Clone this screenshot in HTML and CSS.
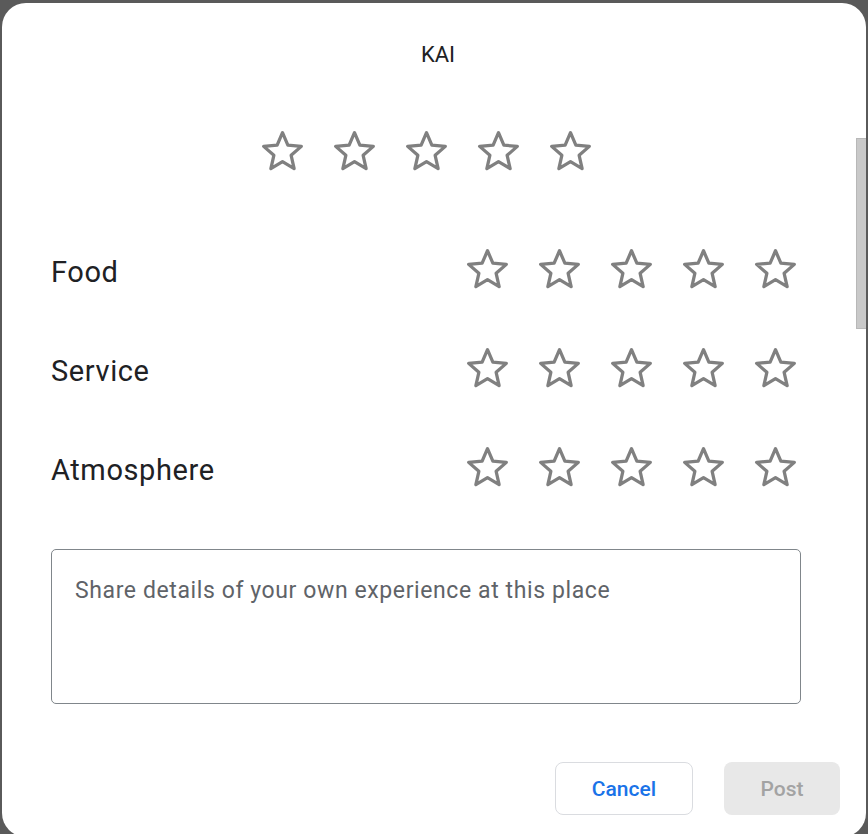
FILE: index.html
```html
<!DOCTYPE html>
<html lang="en">
<head>
<meta charset="utf-8">
<title>KAI review</title>
<link rel="stylesheet" href="styles.css">
</head>
<body>
<svg width="0" height="0" class="defs" aria-hidden="true">
  <defs>
    <symbol id="star" viewBox="0 0 24 24">
      <polygon points="12,2.8 14.62,8.9 21.23,9.5 16.23,13.88 17.7,20.35 12,16.95 6.3,20.35 7.77,13.88 2.77,9.5 9.38,8.9" fill="none" stroke="#808080" stroke-width="1.6" stroke-linejoin="round"/>
    </symbol>
  </defs>
</svg>
<div class="dialog">
  <div class="scrollbar"></div>
  <div class="title">KAI</div>
  <div class="content">
    <div class="stars stars-main">
      <svg class="star"><use href="#star"/></svg>
      <svg class="star"><use href="#star"/></svg>
      <svg class="star"><use href="#star"/></svg>
      <svg class="star"><use href="#star"/></svg>
      <svg class="star"><use href="#star"/></svg>
    </div>
    <div class="rows">
      <div class="row">
        <span class="label">Food</span>
        <div class="stars">
          <svg class="star"><use href="#star"/></svg>
          <svg class="star"><use href="#star"/></svg>
          <svg class="star"><use href="#star"/></svg>
          <svg class="star"><use href="#star"/></svg>
          <svg class="star"><use href="#star"/></svg>
        </div>
      </div>
      <div class="row">
        <span class="label">Service</span>
        <div class="stars">
          <svg class="star"><use href="#star"/></svg>
          <svg class="star"><use href="#star"/></svg>
          <svg class="star"><use href="#star"/></svg>
          <svg class="star"><use href="#star"/></svg>
          <svg class="star"><use href="#star"/></svg>
        </div>
      </div>
      <div class="row">
        <span class="label">Atmosphere</span>
        <div class="stars">
          <svg class="star"><use href="#star"/></svg>
          <svg class="star"><use href="#star"/></svg>
          <svg class="star"><use href="#star"/></svg>
          <svg class="star"><use href="#star"/></svg>
          <svg class="star"><use href="#star"/></svg>
        </div>
      </div>
    </div>
    <div class="textbox">Share details of your own experience at this place</div>
  </div>
  <div class="actions">
    <button class="btn btn-cancel">Cancel</button>
    <button class="btn btn-post">Post</button>
  </div>
</div>
</body>
</html>
```

FILE: styles.css
```css
html, body {
  margin: 0;
  padding: 0;
}
body {
  background: #5a5a5a;
  width: 868px;
  height: 834px;
  overflow: hidden;
  font-family: Roboto, "Liberation Sans", Arial, sans-serif;
}
.defs {
  position: absolute;
  width: 0;
  height: 0;
}
.dialog {
  position: relative;
  margin: 3px 2px 0 2px;
  width: 864px;
  height: 834px;
  background: #ffffff;
  border-radius: 24px;
  overflow: hidden;
  box-sizing: border-box;
}
.scrollbar {
  position: absolute;
  right: 0;
  top: 135px;
  width: 10px;
  height: 191px;
  background: #c9c9c9;
  border-left: 1px solid #b8b8b8;
  border-top: 1px solid #b8b8b8;
  border-bottom: 1px solid #b8b8b8;
  box-sizing: border-box;
}
.title {
  padding-top: 38px;
  height: 28px;
  line-height: 28px;
  font-size: 22px;
  color: #202124;
  text-align: center;
  padding-left: 8px;
}
.content {
  padding: 0 65px 0 49px;
}
.stars {
  display: flex;
  gap: 23px;
}
.star {
  width: 49px;
  height: 49px;
  display: block;
}
.stars-main {
  justify-content: center;
  margin-top: 58px;
}
.rows {
  margin-top: 69px;
  display: flex;
  flex-direction: column;
  gap: 50px;
}
.row {
  display: flex;
  align-items: center;
  justify-content: space-between;
  height: 49px;
}
.row .stars {
  margin-right: 1px;
}
.label {
  font-size: 29px;
  letter-spacing: 0.6px;
  color: #202124;
  padding-top: 4px;
}
.textbox {
  margin-top: 57px;
  height: 155px;
  box-sizing: border-box;
  border: 1px solid #80868b;
  border-radius: 5px;
  padding: 27px 23px;
  font-size: 23px;
  letter-spacing: 0.6px;
  line-height: 28px;
  color: #5f6368;
}
.actions {
  display: flex;
  justify-content: flex-end;
  gap: 31px;
  padding-right: 26px;
  margin-top: 58px;
}
.btn {
  height: 53px;
  border-radius: 8px;
  font-family: Roboto, "Liberation Sans", Arial, sans-serif;
  font-size: 21px;
  font-weight: 500;
  padding: 0;
  box-sizing: border-box;
}
.btn-cancel {
  width: 138px;
  background: #ffffff;
  border: 1px solid #dadce0;
  color: #1a73e8;
}
.btn-post {
  width: 116px;
  background: #e8e8e8;
  border: none;
  color: #a3a3a3;
}
```
